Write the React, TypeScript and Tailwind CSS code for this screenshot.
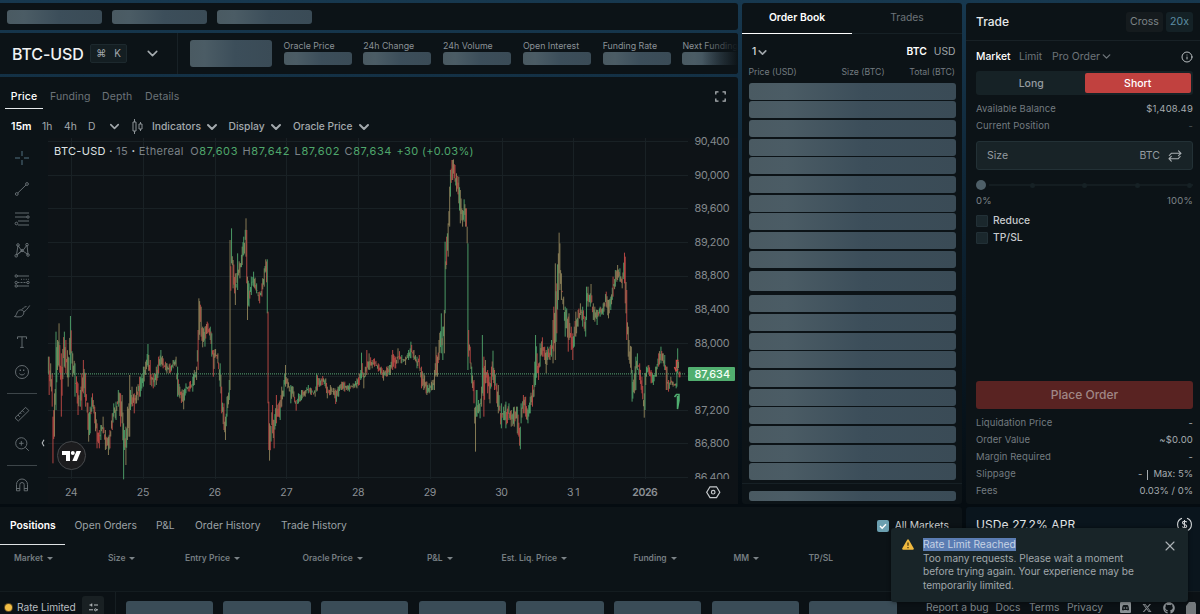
import React from "react";
import { ChevronDown, Info, X } from "lucide-react";
import { FaDiscord, FaGithub, FaXTwitter } from "react-icons/fa6";

const SKELETON = "rounded-[3px] bg-[linear-gradient(90deg,#4a5a62_0%,#4b5c65_18%,#3c4e5a_55%,#3a4b56_100%)]";

// [x, high, low] in plot pixels: three scan segments of the week
const SEG_A = "145,650,700 148,650,765 152,670,740 156,700,800 158,830,970 163,760,890 168,575,810 172,600,690 178,550,680 184,640,830 192,575,680 198,600,700 205,650,740 211,528,690 218,640,710 226,670,770 234,730,825 240,750,800 245,700,810 250,660,760 258,700,800 266,820,905 270,800,880 277,760,800 284,800,850 292,850,925 298,870,925 303,855,900 309,830,880 316,870,930 325,890,945 330,870,925 336,820,870 342,790,830 348,785,840 355,750,800 362,760,860 367,765,850 370,850,1018 374,870,930 378,860,975 383,800,900 387,790,890 389,705,890 392,750,810 396,740,800 402,760,820 410,740,790 420,710,770 430,680,740 437,665,705 444,612,680 450,660,735 460,700,745 470,680,735 476,650,700 482,630,680 490,655,685 500,670,700 510,670,700 520,660,685 528,650,680 532,680,770 540,740,775 550,750,808 558,730,760 570,725,755 578,710,755 583,690,735 590,680,720 594,570,690 597,475,600 603,500,590 609,560,622 615,560,620 621,545,580 630,560,600 636,580,650 640,630,710 646,627,650 653,640,670 660,670,740 666,740,820 671,790,870 677,830,900 682,770,830 688,720,780 691,300,750";
const SEG_B = "34,265,370 40,360,445 47,400,495 53,340,450 60,370,415 66,320,375 72,290,345 77,235,350 80,270,430 82,410,540 88,430,500 95,410,465 101,395,440 110,430,460 118,455,490 126,430,470 132,385,440 137,358,395 141,358,520 144,515,790 146,785,930 149,850,962 157,795,880 163,840,925 169,765,850 176,790,830 180,780,840 186,740,800 192,720,770 197,675,740 203,715,745 213,735,790 220,740,770 228,780,812 236,760,790 245,750,780 255,750,770 264,735,760 275,745,765 285,750,770 291,700,755 300,715,740 309,708,735 317,715,745 322,740,775 332,735,765 345,745,775 347,750,792 355,740,770 365,725,750 375,725,755 388,730,755 400,730,745 411,715,745 418,700,735 423,690,720 425,638,715 431,700,745 437,680,710 440,630,705 448,640,690 456,660,685 463,655,680 475,670,695 484,680,705 491,690,722 500,680,710 510,675,705 518,630,690 527,650,685 534,625,670 545,645,670 556,650,675 566,630,660 573,605,655 581,630,660 590,650,685 597,645,685 604,680,745 612,700,750 620,725,765 628,730,760 637,720,750 643,690,750 647,620,710 653,650,710 658,600,660 663,520,640 668,560,660 672,510,640 676,305,520 680,290,375 685,250,350 688,140,260 692,90,170 697,60,120 699,50,100 704,75,125 710,100,155 716,110,190 722,150,250 728,210,260 733,178,245 738,205,260 741,260,310";
const SEG_C = "24,310,690 26,570,650 30,620,670 35,680,730 42,720,790 46,800,935 50,750,830 56,780,820 60,790,835 64,740,800 68,585,760 72,650,830 77,660,730 83,690,760 90,710,790 95,680,740 98,632,720 104,690,750 110,730,790 116,735,820 123,790,865 130,800,840 137,785,865 146,790,840 153,810,860 162,800,860 169,800,835 173,800,880 180,860,928 184,790,850 190,765,820 196,770,830 203,810,850 210,770,820 217,735,800 222,700,770 226,585,735 232,640,700 236,670,720 241,610,680 247,592,650 253,620,660 258,630,700 264,620,660 270,620,660 275,600,650 280,540,670 285,370,660 290,430,580 294,340,480 297,278,400 300,310,450 305,400,480 310,470,510 315,500,590 320,505,565 324,530,635 328,520,600 334,560,630 339,580,660 343,560,620 348,515,590 355,510,560 362,490,525 369,500,560 377,530,590 380,440,540 385,440,500 390,460,500 394,432,490 399,490,540 405,500,545 412,510,555 420,500,530 430,490,525 438,455,500 445,480,535 452,470,510 460,410,470 467,390,440 473,375,420 480,385,425 486,410,445 493,338,430 496,350,490 500,450,600 504,560,650 508,600,660 513,620,700 517,690,785 523,700,760 528,650,750 532,640,690 538,670,720 545,710,760 552,760,833 555,700,810 559,680,710 566,675,700 573,690,730 580,705,735 588,680,710 595,640,680 602,620,670 609,640,670 615,645,690 620,680,750 625,720,755 632,710,735 640,725,740 648,730,745 651,660,740 654,625,700 658,695,712";

const parse = (s: string, ox: number) =>
  s.split(" ").map((p) => {
    const [x, h, l] = p.split(",").map(Number);
    return { x: ox + x / 3 - 48, h: h / 3 + 2, l: l / 3 + 2 };
  });
const POINTS = [...parse(SEG_A, 0), ...parse(SEG_B, 220), ...parse(SEG_C, 460)];

type Candle = { x: number; h: number; l: number; color: string };
const buildCandles = (): Candle[] => {
  const out: Candle[] = [];
  let seed = 7;
  const rnd = () => {
    seed = (seed * 16807) % 2147483647;
    return seed / 2147483647;
  };
  let i = 0;
  for (let x = 0.4; x < 632; x += 0.76) {
    while (i < POINTS.length - 2 && POINTS[i + 1].x < x) i++;
    const a = POINTS[i];
    const b = POINTS[i + 1];
    const t = Math.max(0, Math.min(1, (x - a.x) / (b.x - a.x)));
    const snap = x - a.x < 0.4 ? a : b.x - x < 0.4 ? b : null;
    const h = snap ? snap.h : a.h + (b.h - a.h) * t;
    const l = snap ? snap.l : a.l + (b.l - a.l) * t;
    const r = l - h;
    const trim = snap ? 0 : 0.5;
    const slope = b.h + b.l - a.h - a.l;
    const up = rnd() < (slope < -4 ? 0.75 : slope > 4 ? 0.22 : 0.5);
    const mixed = rnd() < 0.38;
    out.push({
      x,
      h: h + r * trim * rnd(),
      l: l - r * trim * rnd(),
      color: mixed ? "#9b8c60" : up ? "#55b072" : "#d04f4a",
    });
  }
  return out;
};
const CANDLES = buildCandles();

const PRICES = ["90,400", "90,000", "89,600", "89,200", "88,800", "88,400", "88,000", "", "87,200", "86,800", "86,400"];
const DAYS = ["24", "25", "26", "27", "28", "29", "30", "31", "2026"];

function Chart() {
  return (
    <svg width="690" height="366" viewBox="0 0 690 366" className="block overflow-visible" fontFamily="Inter, sans-serif">
      <g stroke="#192125" strokeWidth="1" shapeRendering="crispEdges">
        {PRICES.map((_, i) => (
          <line key={i} x1="0" x2="640" y1={3.8 + i * 33.57} y2={3.8 + i * 33.57} />
        ))}
        {DAYS.map((d, i) => (
          <line key={d} y1="0" y2="341" x1={23.5 + i * 71.75} x2={23.5 + i * 71.75} />
        ))}
      </g>
      {CANDLES.map((c, i) => (
        <line key={i} x1={c.x} x2={c.x} y1={c.h} y2={c.l} stroke={c.color} strokeWidth="0.85" />
      ))}
      <line x1="0" x2="638" y1="235.9" y2="235.9" stroke="#57a873" strokeWidth="1" strokeDasharray="1 1" />
      <path d="M630.500 222.500h-2v8M626.500 229l1.500 4 2 -2" stroke="#d04f4a" strokeWidth="1.500" fill="none" />
      <path d="M626.500 259l2-2.500h2.500v6l-1.500 8.500v-13" stroke="#4fae70" strokeWidth="1.500" fill="none" />
      <svg x="0" y="-8" width="690" height="349">
        <g fill="#83898d" fontSize="10.8">
          {PRICES.map((p, i) => (
            <text key={i} x="646.5" y={15.1 + i * 33.57} textLength={p ? 35 : undefined}>{p}</text>
          ))}
        </g>
      </svg>
      <rect x="640" y="229" width="47" height="14" rx="1" fill="#51ae6f" />
      <text x="646.500" y="239.500" fontSize="10.800" fontWeight="500" fill="#f3fff6" textLength="35.500">87,634</text>
      <g fill="#8b9095" fontSize="10.500" textAnchor="middle">
        {DAYS.map((d, i) => (
          <text key={d} x={23.3 + i * 71.72} y="357.800" fontWeight={d === "2026" ? 600 : 400} textLength={d === "2026" ? 25.5 : 12.5}>{d}</text>
        ))}
      </g>
      <g stroke="#c5c9cc" strokeWidth="1.200" fill="none">
        <path d="M662 348.800h6.500l3.300 5.400-3.300 5.400H662l-3.300-5.400z" />
        <circle cx="665.200" cy="354.200" r="1.800" />
      </g>
    </svg>
  );
}

function Tool({ h, children }: { h: string; children: React.ReactNode }) {
  return (
    <div className={`flex w-11 shrink-0 items-center justify-center ${h}`}>
      <svg width="18" height="18" viewBox="0 0 18 18" fill="none" stroke="#6c7478" strokeWidth="0.900">
        {children}
      </svg>
    </div>
  );
}

function DrawingTools() {
  return (
    <div className="flex w-12 shrink-0 flex-col pt-[5px]">
      <Tool h="h-[30.6px]"><path d="M9 2v5M9 11v5M2 9h5M11 9h5" stroke="#5a7b8c" /></Tool>
      <Tool h="h-[30.6px]"><circle cx="3.800" cy="14" r="1.400" /><circle cx="14" cy="4" r="1.400" /><path d="M4.800 13L13 5" /></Tool>
      <Tool h="h-[30.6px]"><path d="M2 3h14M2 7h12M5 11h11M5 15h11" /><circle cx="15" cy="7" r="1.200" /><circle cx="3.400" cy="13.500" r="1.300" /></Tool>
      <Tool h="h-[30.6px]"><path d="M3.500 14L5 4.500l4.200 6L14 4l1 9.500L9.200 9.500zM4 14l5-4.500" /><circle cx="5" cy="4" r="1.300" /><circle cx="14" cy="3.700" r="1.300" /><circle cx="3.200" cy="14.800" r="1.300" /><circle cx="15" cy="14" r="1.300" /><circle cx="9.100" cy="9.500" r="1.200" /></Tool>
      <Tool h="h-[30.6px]"><path d="M4 4h12M4 14h12" /><path d="M4.500 10.500H14" strokeDasharray="2 1" /><path d="M8 7.300h8" strokeDasharray="1 1.400" /><circle cx="3.200" cy="4" r="1.200" /><circle cx="3.200" cy="10.500" r="1.200" /><circle cx="15" cy="10.500" r="1.200" /><circle cx="3.200" cy="14" r="1.200" /></Tool>
      <Tool h="h-[30.6px]"><path d="M1.500 14.500c2-.5 1.800-3 3.200-5 1.500-2 4.800-2.200 5.800-.2 1 2.300-.7 5.200-3.700 5.500-2.100.2-3.500.2-5.300-.3zM8.500 8c1.500-1 2-3.200 5-3.500M10.700 9.800c1.800-.5 3.800-3 6-6.300" /></Tool>
      <Tool h="h-[30.6px]"><path d="M4.500 6V3.800h9V6M9 3.800v10.500M7.200 14.400h3.600" /></Tool>
      <Tool h="h-[30.6px]"><circle cx="9" cy="9" r="6.500" /><path d="M6.300 10.600c1.400 1.800 4 1.800 5.400 0" /><path d="M7.300 6.500v1.500M10.700 6.500v1.500" strokeWidth="1.200" /></Tool>
      <div className="mt-[5px] ml-[7px] h-px w-[30px] shrink-0 bg-[#3d4549]" />
      <Tool h="h-[40px]"><path d="M2 12.800L12.600 2.300l3.300 3.300L5.300 16zM5 10l1.800 1.800M7.200 7.800l1.200 1.200M9.300 5.600l1.800 1.800" /></Tool>
      <div className="relative flex shrink-0">
        <Tool h="h-[20px]"><circle cx="8.300" cy="8.300" r="5.600" /><path d="M12.400 12.400l3.400 3.400M8.300 6v4.600M6 8.300h4.600" /></Tool>
        <svg className="absolute top-[5px] left-[41px]" width="4" height="8" viewBox="0 0 4 8" fill="none" stroke="#b5babd" strokeWidth="1.100"><path d="M3 .8L1.200 4 3 7.200" /></svg>
      </div>
      <div className="mt-[11px] ml-[7px] h-px w-[30px] shrink-0 bg-[#3d4549]" />
      <Tool h="h-[39px]"><path d="M3.500 14.800V8.500a5.500 5.500 0 0 1 11 0v6.300h-3.300V8.700a2.200 2.200 0 0 0-4.400 0v6.100zM3.500 12.500h3.300M11.200 12.500h3.300" /></Tool>
    </div>
  );
}

const Val = ({ k, v }: { k: string; v: string }) => (
  <span className="text-[#7b8287]">{k}<span className="text-[#4fa76c]">{v}</span></span>
);

function ChartPanel() {
  return (
    <section className="relative flex h-[427px] flex-col rounded-r-[3px] bg-[#0c1317]">
      <div className="flex h-[32px] items-stretch pl-[5px] text-[10.500px] tracking-[0.100px] text-[#6d7479]">
        <span className="mr-[7px] flex w-[38px] items-center justify-center border-b border-[#e8ebed] pt-[8px] font-medium text-white">Price</span>
        <span className="flex w-[52px] items-center pt-[7px]">Funding</span>
        <span className="flex w-[43px] items-center pt-[7px]">Depth</span>
        <span className="flex items-center pt-[7px]">Details</span>
        <svg className="mt-[14px] mr-[12px] ml-auto" width="11" height="11" viewBox="0 0 11 11" fill="none" stroke="#aeb3b6" strokeWidth="1.300">
          <path d="M.8 3.500V.8h2.700M7.500.8h2.700v2.700M10.200 7.500v2.700H7.500M3.500 10.200H.8V7.500" />
        </svg>
      </div>
      <div className="flex h-[29px] items-center pt-[6px] pl-[11px] text-[10.300px] text-[#a3a9ad]">
        <span className="w-[31px] text-[10.500px] font-semibold text-white">15m</span>
        <span className="w-[22px]">1h</span>
        <span className="w-[24px]">4h</span>
        <span className="w-[19px]">D</span>
        <ChevronDown size={15} strokeWidth={2.5} />
        <svg className="ml-[10px]" width="11" height="15" viewBox="0 0 11 15" fill="none" stroke="#8c9397">
          <path d="M2.500 0v3M2.500 12v3M8.500 3v2M8.500 10v2M1 3h3v9H1zM7 5h3v5H7z" />
        </svg>
        <span className="ml-[9px] w-[51.500px] font-medium">Indicators</span>
        <ChevronDown size={16} strokeWidth={3} />
        <span className="ml-[9px] w-[39.500px] font-medium">Display</span>
        <ChevronDown size={16} strokeWidth={3} />
        <span className="ml-[9px] w-[63px] text-[10.200px] font-medium tracking-[-0.020px]">Oracle Price</span>
        <ChevronDown size={16} strokeWidth={3} />
      </div>
      <div className="flex h-[366px]">
        <DrawingTools />
        <div className="relative bg-[#0e1317]">
          <Chart />
          <div className="absolute top-[6px] left-[6px] flex items-center text-[11px] leading-[15px] tracking-[0.320px] whitespace-pre">
            <span className="text-[#dfe2e4]">BTC-USD · </span>
            <span className="text-[#7b8287]">15 <b className="text-[#dfe2e4]">·</b> Ethereal</span>
            <span className="ml-[6.500px] flex gap-[4.500px] tracking-[0.600px]">
              <Val k="O" v="87,603" />
              <Val k="H" v="87,642" />
              <Val k="L" v="87,602" />
              <Val k="C" v="87,634" />
              <span className="tracking-[0.330px] text-[#4fa76c]">+30 (+0.03%)</span>
            </span>
          </div>
          <div className="absolute top-[303px] left-[9px] flex size-[29px] items-center justify-center rounded-full border border-[#46494c] bg-[#1c1c1e]">
            <svg width="19" height="10" viewBox="0 0 19 10" fill="#fff">
              <path d="M0 0h8v10H4V4H0zM14.500 0H19l-4.200 10h-4.500z" />
              <circle cx="10.800" cy="2" r="2" />
            </svg>
          </div>
        </div>
      </div>
    </section>
  );
}

const STATS = ["Oracle Price", "24h Change", "24h Volume", "Open Interest", "Funding Rate", "Next Funding"];

function MarketBar() {
  return (
    <section className="relative flex h-[41px] overflow-hidden rounded-r-[3px] bg-[#0c1317]">
      <div className="flex w-[178px] shrink-0 items-center border-r border-[#182126] pl-3">
        <span className="w-[78px] text-[16px] font-medium tracking-[-0.100px] text-[#f1f3f4]">BTC-USD</span>
        <span className="flex h-[19px] w-[37px] items-center justify-center gap-2 rounded-[2px] border border-[#1d292e] bg-[#141e22] text-[10px] text-[#a2a8ac]">
          <span>⌘</span><span>K</span>
        </span>
        <ChevronDown size={17} strokeWidth={2.2} className="ml-[16.500px] text-[#a6acb0]" />
      </div>
      <div className={`mt-[7px] ml-3 h-[27px] w-[81.500px] shrink-0 ${SKELETON}`} />
      <div className="ml-3 flex gap-[11.800px] pt-[8px]">
        {STATS.map((s) => (
          <div key={s} className="w-[68px] shrink-0">
            <div className="h-[11px] text-[8.800px] leading-[10px] whitespace-nowrap text-[#8a9196]">{s}</div>
            <div className={`h-[13px] ${SKELETON}`} />
          </div>
        ))}
      </div>
      <div className="absolute inset-y-0 right-0 w-[36px] bg-linear-to-r from-[#0c131700] to-[#0c1317]" />
    </section>
  );
}

const Bar = ({ h }: { h: string }) => <div className={`${h} ${SKELETON}`} />;

function OrderBook() {
  const rows = Array.from({ length: 10 });
  return (
    <section className="flex h-[501px] w-[220px] shrink-0 flex-col rounded-[3px] bg-[#0c1317]">
      <div className="flex h-[31px] text-[10.300px]">
        <span className="flex w-[110px] items-center justify-center border-b border-white font-semibold text-white">Order Book</span>
        <span className="flex w-[110px] items-center justify-center border-b border-[#162025] text-[#6d7479]">Trades</span>
      </div>
      <div className="flex h-[36px] items-center pr-[6.500px] pl-[10px] text-[10.300px] text-[#a0a6aa]">
        <span className="font-medium text-[#d8dbdd]">1</span>
        <ChevronDown size={13} strokeWidth={3} />
        <span className="ml-auto font-semibold text-white">BTC</span>
        <span className="ml-[7px]">USD</span>
      </div>
      <div className="-mt-[4px] flex h-[13px] items-center pr-[7px] pl-[6.500px] text-[8.700px] text-[#737b80]">
        <span className="w-[93px]">Price (USD)</span>
        <span>Size (BTC)</span>
        <span className="ml-auto">Total (BTC)</span>
      </div>
      <div className="flex flex-col gap-[1.700px] pt-[3.500px] pr-[6.500px] pl-[6.500px]">
        {rows.map((_, i) => <Bar key={i} h="h-[17px]" />)}
      </div>
      <div className="px-[6.500px] pt-[3px] pb-[4px]"><Bar h="h-[20.500px]" /></div>
      <div className="flex flex-col gap-[1.700px] px-[6.500px]">
        {rows.map((_, i) => <Bar key={i} h="h-[17px]" />)}
      </div>
      <div className="mt-[3px] border-t border-[#162025] px-[6.500px] pt-[7px]"><Bar h="h-[10px]" /></div>
    </section>
  );
}

const Row = ({ k, v }: { k: string; v: React.ReactNode }) => (
  <div className="flex h-[17px] items-center justify-between tracking-[0.080px] text-[#737b80]">
    <span>{k}</span>
    <span className="tracking-[0.180px] text-[#a5abaf]">{v}</span>
  </div>
);

const Check = ({ label }: { label: string }) => (
  <div className="flex h-[17px] items-center gap-[5px] text-[10.300px] font-medium text-[#c6cacc]">
    <span className="size-3 rounded-[1px] border border-[#223036] bg-[#1a272c]" />
    {label}
  </div>
);

function TradePanel() {
  return (
    <section className="flex h-[501px] flex-1 flex-col rounded-l-[3px] bg-[#0c1317] text-[9.500px]">
      <div className="flex h-[38px] items-center border-b border-[#182126] pr-[7px] pl-[10px]">
        <span className="text-[12px] font-medium text-[#e6e9ea]">Trade</span>
        <span className="ml-auto flex h-5 w-[37px] items-center justify-center rounded-[3px] bg-[#151b1e] text-[10.500px] text-[#7d8488]">Cross</span>
        <span className="ml-[3px] flex h-5 w-[27px] items-center justify-center rounded-[3px] bg-[#142126] text-[10.500px] text-[#5e8fa5]">20x</span>
      </div>
      <div className="flex h-[30px] items-center pt-px pr-[7px] pl-[10px] text-[10.300px] text-[#6d7479]">
        <span className="w-[43px] font-medium text-white">Market</span>
        <span className="w-[33px]">Limit</span>
        <span className="text-[10.500px]">Pro Order</span>
        <ChevronDown size={13} strokeWidth={2.500} />
        <Info size={12} className="ml-auto text-[#b9bec1]" />
      </div>
      <div className="mr-[7px] ml-[10px] flex h-6 rounded-[3px] bg-[#162226] p-[2px] text-[10.500px] font-medium">
        <span className="flex flex-1 items-center justify-center pt-px text-[#959ca0]">Long</span>
        <span className="flex flex-1 items-center justify-center rounded-[2px] bg-[#c1413f] pt-px text-white">Short</span>
      </div>
      <div className="mr-[7px] ml-[10px] flex flex-col pt-[6px]">
        <Row k="Available Balance" v="$1,408.49" />
        <Row k="Current Position" v={<span className="text-[#4b5357]">-</span>} />
        <div className="mt-[6px] flex h-[29px] items-center rounded-[3px] border border-[#233136] bg-[#182327] px-[10px] text-[10.500px] text-[#959ca0]">
          <span>Size</span>
          <span className="ml-auto">BTC</span>
          <svg className="ml-[8px]" width="14" height="12" viewBox="0 0 14 12" fill="none" stroke="#a8aeb2" strokeWidth="1.100" strokeLinecap="round" strokeLinejoin="round">
            <path d="M1.300 5.500L3.300 3.300H13M10.500.8L13 3.300l-2.500 2.300M12.200 6.500l-2 2.200H1M3.300 6.300L1 8.700l2.300 2.400" />
          </svg>
        </div>
        <div className="relative mt-[10px] flex h-[10px] items-center">
          <span className="size-[10px] rounded-full bg-[#4e5f68]" />
          <span className="ml-[3px] flex h-[2px] flex-1 items-center justify-between bg-[#141d21] pr-px pl-[41px]">
            {[0, 1, 2, 3].map((i) => <i key={i} className="size-[5px] rounded-full bg-[#162125]" />)}
          </span>
        </div>
        <div className="flex h-[21px] items-center justify-between pt-px tracking-[0.200px] text-[#7d8488]"><span>0%</span><span>100%</span></div>
        <div className="mt-[1px]"><Check label="Reduce" /><Check label="TP/SL" /></div>
      </div>
      <div className="mt-auto mr-[7px] ml-[10px] pb-[4px]">
        <div className="mb-[6px] flex h-7 items-center justify-center rounded-[3px] bg-[#592322] text-[12px] font-medium text-[#a08786]">Place Order</div>
        <Row k="Liquidation Price" v="-" />
        <Row k="Order Value" v="~$0.00" />
        <Row k="Margin Required" v="-" />
        <Row k="Slippage" v={<span className="flex items-center gap-[5px] tracking-normal">-<i className="h-[10px] w-px bg-[#a5abaf]" />Max: 5%</span>} />
        <Row k="Fees" v={<span className="tracking-normal">0.03% / 0%</span>} />
      </div>
    </section>
  );
}

const Head = ({ w, label, sort = true }: { w: string; label: string; sort?: boolean }) => (
  <span className={`flex shrink-0 items-center gap-1 ${w}`}>
    {label}
    {sort && <i className="border-x-[3px] border-t-[3px] border-x-transparent border-t-[#7c8488]" />}
  </span>
);

function Positions() {
  return (
    <section className="flex h-[84px] w-[962px] flex-col rounded-r-[3px] bg-[#0c1317]">
      <div className="flex h-[38px] text-[10.300px] text-[#9ba1a5]">
        <span className="flex w-[65px] items-center border-b border-[#dfe2e4] pl-[10px] font-semibold text-white">Positions</span>
        <span className="flex w-[91px] items-center pl-[9.500px]">Open Orders</span>
        <span className="flex w-[39px] items-center">P&amp;L</span>
        <span className="flex w-[86px] items-center">Order History</span>
        <span className="flex items-center">Trade History</span>
        <span className="mr-[13px] ml-auto flex items-center gap-[6px] text-[#d0d4d6]">
          <svg width="12" height="12" viewBox="0 0 12 12"><rect width="12" height="12" rx="2" fill="#6b9fb0" /><path d="M3 6l2.200 2.200L9 4.300" fill="none" stroke="#fff" strokeWidth="1.400" /></svg>
          All Markets
        </span>
      </div>
      <div className="flex h-[27px] items-center pl-[14px] text-[8.500px] font-semibold text-[#757d81]">
        <Head w="w-[94px]" label="Market" />
        <Head w="w-[77px]" label="Size" />
        <Head w="w-[117.500px]" label="Entry Price" />
        <Head w="w-[124.500px]" label="Oracle Price" />
        <Head w="w-[74.500px]" label="P&L" />
        <Head w="w-[132px]" label="Est. Liq. Price" />
        <Head w="w-[100px]" label="Funding" />
        <Head w="w-[75px]" label="MM" />
        <Head w="w-[40px]" label="TP/SL" sort={false} />
      </div>
    </section>
  );
}

function Footer() {
  return (
    <footer className="flex h-[23px] shrink-0 items-start border-t border-[#141c20] bg-[#0b1115] text-[10.300px]">
      <div className="flex h-[31px] w-[116px] shrink-0 items-center border-r border-[#161e22] pl-[5px] text-[#b9bec1]">
        <span className="size-[7px] rounded-full bg-[#f1bd45] ring-1 ring-[#5e4a22]" />
        <span className="ml-[5px] w-[65px] text-[10.200px] tracking-[-0.050px] whitespace-nowrap">Rate Limited</span>
        <span className="-mt-px flex h-[22px] w-[22px] items-center justify-center rounded-[3px] bg-[#192023]">
          <svg width="9" height="9" viewBox="0 0 9 9" fill="none" stroke="#b9bec1" strokeWidth="1"><path d="M.5 2h2.500M5 2h4M0 6.800h4M7.500 6.800H9M2.800.5v3M1.500 2l1.500 0" /><circle cx="6.500" cy="6.800" r="1" /></svg>
        </span>
      </div>
      <div className="flex gap-[10.200px] pt-[9px] pl-[9.500px]">
        {Array.from({ length: 8 }).map((_, i) => <div key={i} className="h-[14px] w-[87.500px] rounded-t-[3px] bg-[#3a4c57]" />)}
      </div>
      <div className="ml-auto flex h-[31px] items-center pr-[4px] text-[#7d8488]">
        <span className="w-[69.500px] whitespace-nowrap">Report a bug</span>
        <span className="w-[33.500px]">Docs</span>
        <span className="w-[38px]">Terms</span>
        <span className="w-[53px]">Privacy</span>
        <span className="flex items-center gap-[11px] text-[#8a9094]">
          <svg width="11" height="11" viewBox="0 0 11 11"><rect width="11" height="11" rx="1" fill="#8a9094" /><path d="M2 8c0-3 .7-4.500 1.500-5h4C8.300 3.500 9 5 9 8c-1 .7-1.500.5-2 0H4c-.5.500-1 .700-2 0z" fill="#12181b" /><circle cx="4.200" cy="6" r=".8" fill="#8a9094" /><circle cx="6.800" cy="6" r=".8" fill="#8a9094" /></svg>
          <FaXTwitter size={10} />
          <FaGithub size={12} />
          <svg width="10" height="12" viewBox="0 0 10 12"><path d="M0 4L3 0h6l1 2v10H0z" fill="#74797c" /></svg>
        </span>
      </div>
    </footer>
  );
}

function Toast() {
  return (
    <div className="absolute top-[528px] left-[891px] flex h-[74px] w-[297px] rounded-[3px] bg-[#182428] shadow-[0_0_4px_rgba(0,0,0,0.5)]">
      <svg className="mt-[11px] ml-[11px]" width="12" height="11" viewBox="0 0 12 11"><path d="M5.200.7a.9.900 0 0 1 1.600 0l4.900 8.600a.9.900 0 0 1-.8 1.400H1.100a.9.900 0 0 1-.8-1.400z" fill="#f0b93e" /><path d="M6 3.500v3.300M6 8v1.200" stroke="#3b2c0d" strokeWidth="1.200" /></svg>
      <div className="ml-[9px] pt-[10px] text-[10.100px] leading-[13.600px] tracking-[-0.020px] text-[#a0a7ab]">
        <div><span className="inline-block h-[13px] bg-[#5b7db3] text-[10.250px] leading-[13px] tracking-normal text-[#c6d2e4]">Rate Limit Reached</span></div>
        <div className="whitespace-nowrap">Too many requests. Please wait a moment<br />before trying again. Your experience may be<br />temporarily limited.</div>
      </div>
      <X size={16} strokeWidth={1.600} className="absolute top-[10px] right-[10.500px] text-[#aeb4b8]" />
    </div>
  );
}

export default function App() {
  return (
    <div className="relative flex h-[614px] w-[1200px] flex-col overflow-hidden bg-linear-to-b from-[#17384f] via-[#0b1e2c] via-45% to-[#050c11] to-82% font-['Inter',sans-serif]">
      <main className="flex h-[507px] shrink-0 gap-1 pt-[3px]">
        <div className="flex w-[738px] shrink-0 flex-col gap-[3px]">
          <div className="flex h-[27px] items-center gap-[10px] rounded-r-[3px] bg-[#0c1317] pl-[7px]">
            {[0, 1, 2].map((i) => <div key={i} className={`h-[14px] w-[95px] ${SKELETON}`} />)}
          </div>
          <MarketBar />
          <ChartPanel />
        </div>
        <OrderBook />
        <TradePanel />
      </main>
      <div className="flex h-[84px] shrink-0 gap-1">
        <Positions />
        <section className="flex h-[84px] flex-1 items-start justify-between rounded-l-[3px] bg-[#0a151d] pt-[10px] pr-2 pl-[10px] text-[#e4e7e9]">
          <span className="text-[12px] leading-[16px] tracking-[0.100px]">USDe 27.2% APR</span>
          <svg width="15" height="15" viewBox="0 0 15 15" fill="none" stroke="#d4d7d9" strokeWidth="1.100"><path d="M5 1.200a6.700 6.700 0 0 0 0 12.600M10 1.200a6.700 6.700 0 0 1 0 12.600M9.700 5.300C9 3.800 5.500 4 5.500 5.800c0 2 4.200 1.300 4.200 3.400 0 1.800-3.600 2-4.400.3M7.500 3v9" /></svg>
        </section>
      </div>
      <Footer />
      <Toast />
    </div>
  );
}
